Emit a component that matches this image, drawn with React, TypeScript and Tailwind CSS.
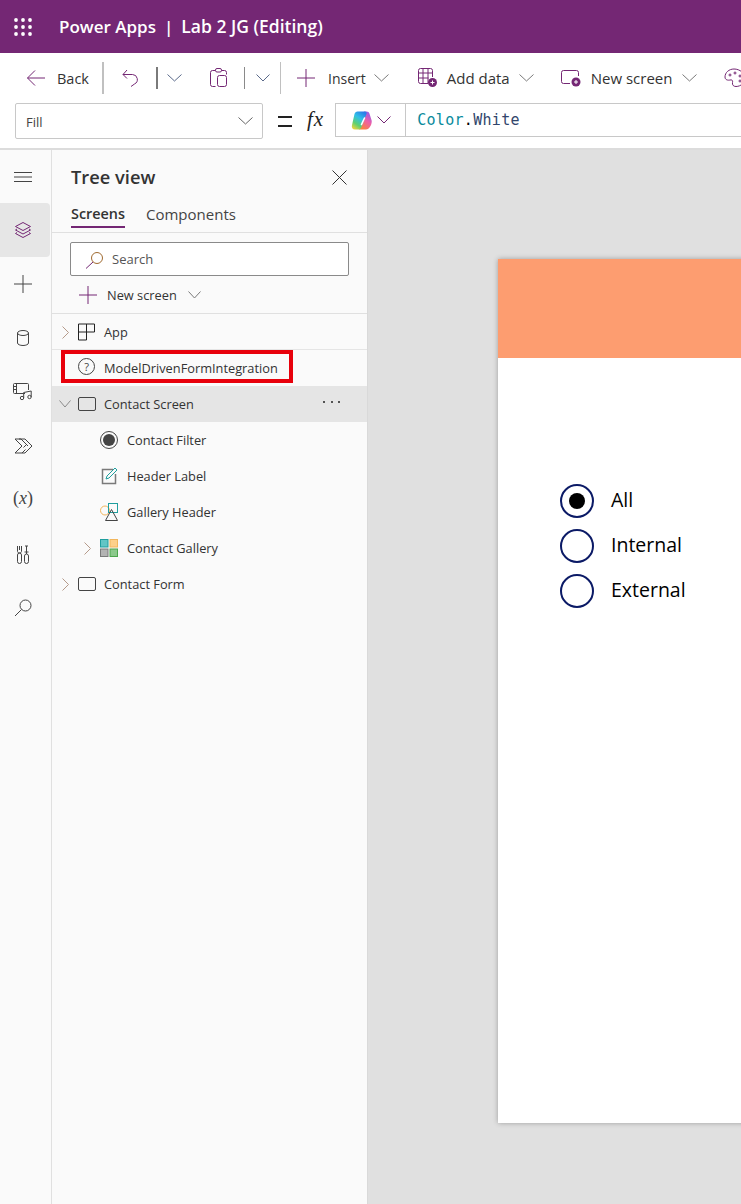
const FONT = { fontFamily: '"Open Sans", "Noto Sans", sans-serif' }

function Icon({ children, w = 20, h = 20, className = '' }: { children: React.ReactNode; w?: number; h?: number; className?: string }) {
  return (
    <svg width={w} height={h} viewBox={`0 0 ${w} ${h}`} fill="none" stroke="currentColor" strokeWidth="1" className={`shrink-0 ${className}`}>
      {children}
    </svg>
  )
}

function Chevron({ className = 'text-[#7a7a7a]', w = 15 }: { className?: string; w?: number }) {
  const mid = w / 2
  return (
    <Icon w={w} h={8} className={className}>
      <path d={`M.5 .5 ${mid} 7 ${w - 0.5} .5`} />
    </Icon>
  )
}

function ChevronSide() {
  return (
    <Icon w={7} h={13} className="text-[#b59a8a]">
      <path d="M.5 .5 6.500 6.500 .5 12.500" />
    </Icon>
  )
}

function WaffleIcon() {
  return (
    <svg width="18" height="18" viewBox="0 0 18 18" fill="white" className="shrink-0">
      {[2, 9, 16].flatMap((y) => [2, 9, 16].map((x) => <circle key={`${x}-${y}`} cx={x} cy={y} r="1.9" />))}
    </svg>
  )
}

function CopilotIcon() {
  return (
    <svg width="21" height="21" viewBox="0 0 21 21" className="shrink-0">
      <defs>
        <linearGradient id="cpLeft" x1="0.7" y1="0" x2="0.15" y2="1">
          <stop offset="0" stopColor="#2a7fe8" />
          <stop offset="0.35" stopColor="#2fc0e8" />
          <stop offset="0.7" stopColor="#5fd070" />
          <stop offset="1" stopColor="#f2d43c" />
        </linearGradient>
        <linearGradient id="cpRight" x1="0.85" y1="0" x2="0.3" y2="1">
          <stop offset="0" stopColor="#8a5cf0" />
          <stop offset="0.5" stopColor="#ee5fa7" />
          <stop offset="1" stopColor="#f9853c" />
        </linearGradient>
      </defs>
      <path d="M13 1.500h2.500c1.500 0 2.500.8 3 2.300l2 6.200c.8 2.800-.6 5.500-2 7.500-.8 1.300-2 2-3.500 2H8Z" fill="url(#cpRight)" />
      <path d="M6.500 1.500h7.500c1.500 0 2 1 1.500 2.500L10 18c-.5 1-1.500 1.500-3 1.500H4C1.500 19.500.3 17.500 1 15L3.500 4C4 2.500 5 1.500 6.500 1.500Z" fill="url(#cpLeft)" />
      <path d="M13.500 8 10.500 14.500" stroke="white" strokeWidth="1.600" strokeLinecap="round" />
    </svg>
  )
}

function RailButton({ children, active = false }: { children: React.ReactNode; active?: boolean }) {
  return (
    <div className={`flex h-[54px] w-[50px] items-center justify-center pr-[4px] ${active ? 'rounded-r-sm bg-[#e6e6e6]' : ''}`}>
      {children}
    </div>
  )
}

function Rail() {
  return (
    <aside className="flex w-[52px] shrink-0 flex-col border-r border-[#e0e0e0] bg-[#fafafa] text-[#444]">
      <div className="flex h-[53px] w-[50px] items-center justify-center pr-[4px]">
        <Icon w={18} h={12}>
          <path d="M0 1.500h18M0 6h18M0 10.500h18" />
        </Icon>
      </div>
      <RailButton active>
        <Icon w={18} h={18} className="text-[#742774]">
          <path d="M9 1.500 16.500 5.500 9 9.500 1.500 5.500Z" />
          <path d="M3 8 1.500 9 9 13 16.500 9 15 8" />
          <path d="M3 11.500 1.500 12.500 9 16.500 16.500 12.500 15 11.500" />
        </Icon>
      </RailButton>
      <RailButton>
        <Icon w={18} h={18}>
          <path d="M9 0v18M0 9h18" />
        </Icon>
      </RailButton>
      <RailButton>
        <Icon w={14} h={16}>
          <ellipse cx="7" cy="3" rx="5.500" ry="2.500" />
          <path d="M1.500 3v10c0 1.400 2.500 2.500 5.500 2.500s5.500-1.100 5.500-2.500V3" />
        </Icon>
      </RailButton>
      <RailButton>
        <Icon w={20} h={18}>
          <path d="M12 10.500H1.500a1 1 0 0 1-1-1v-8a1 1 0 0 1 1-1h13a1 1 0 0 1 1 1V7" />
          <path d="M3.500.500v10M.500 3.500h3M.500 6.500h3" />
          <circle cx="9" cy="15" r="1.700" />
          <circle cx="16.500" cy="14" r="1.700" />
          <path d="M10.700 15V9.500l7.500-1.500v6" />
        </Icon>
      </RailButton>
      <RailButton>
        <Icon w={19} h={16}>
          <path d="M1 1h10l7 7-7 7H1l7-7Z" />
          <path d="M5 1h2l7 7M8 15l3.500-3.500" />
          <path d="m9.500 9.500 3-3" />
        </Icon>
      </RailButton>
      <RailButton>
        <span className="-translate-y-[2px] text-[18px] text-[#444]" style={{ fontFamily: '"Liberation Serif", serif' }}>
          (<i>x</i>)
        </span>
      </RailButton>
      <RailButton>
        <Icon w={12} h={19}>
          <rect x=".500" y="8" width="4" height="10.500" rx="2" />
          <path d="M.500 1v5.500c0 .8.800 1.500 2 1.500s2-.7 2-1.500V1M2.500 1v4" />
          <rect x="7.500" y="9" width="4" height="9.500" rx="2" />
          <path d="M9.500 9V1M8 1h3" />
          <path d="M7.500 7h4" />
        </Icon>
      </RailButton>
      <RailButton>
        <Icon w={18} h={18}>
          <circle cx="11.500" cy="6.500" r="5.500" />
          <path d="M7.500 10.500 1 17" />
        </Icon>
      </RailButton>
    </aside>
  )
}

function TreeRow({
  label,
  icon,
  expander,
  nested = false,
  selected = false,
  children,
}: {
  label: string
  icon: React.ReactNode
  expander?: 'open' | 'closed'
  nested?: boolean
  selected?: boolean
  children?: React.ReactNode
}) {
  return (
    <div className={`flex h-9 items-center text-[12.8px] text-[#333] ${selected ? 'bg-[#e5e5e5]' : ''} ${nested ? 'pl-[26px]' : 'pl-[4px]'}`}>
      <span className="flex w-[18px] shrink-0 items-center justify-center">
        {expander === 'open' && <Chevron w={12} className="text-[#8a8a8a]" />}
        {expander === 'closed' && <ChevronSide />}
      </span>
      <span className={`ml-[4px] flex shrink-0 items-center ${nested ? 'w-[27px]' : 'w-[26px]'}`}>{icon}</span>
      <span className="translate-y-[0.5px]">{label}</span>
      {children}
    </div>
  )
}

const ScreenIcon = (
  <Icon w={18} h={14} className="text-[#444]">
    <rect x=".500" y=".500" width="17" height="13" rx="1.500" />
  </Icon>
)

function TreePanel() {
  return (
    <section className="flex w-[316px] shrink-0 flex-col border-r border-[#d9d9d9] bg-[#fafafa]">
      <div className="flex h-[54px] items-center justify-between pl-[19px] pr-[20px]">
        <h2 className="text-[18.3px] font-semibold text-[#333]">Tree view</h2>
        <Icon w={15} h={15} className="text-[#333]">
          <path d="m.5 .5 14 14M14.500 .5l-14 14" />
        </Icon>
      </div>
      <div className="flex h-[29px] items-start gap-[21px] border-b border-[#e0e0e0] pl-[19px] leading-[20px]">
        <span className="relative h-[24px] text-[14.4px] font-semibold text-[#333]">
          Screens
          <span className="absolute bottom-0 left-0 right-0 h-[2px] bg-[#742774]" />
        </span>
        <span className="text-[15px] text-[#444]">Components</span>
      </div>
      <div className="ml-[18px] mt-[9px] flex h-[34px] w-[279px] items-center rounded-[2px] border border-[#8a8a8a] bg-white pl-[14px] pt-px text-[13px] text-[#555]">
        <Icon w={20} h={18} className="text-[#742774]">
          <circle cx="12" cy="7" r="5.500" stroke="#a06a30" />
          <path d="M8 11 1 17.500" />
        </Icon>
        <span className="ml-[7px]">Search</span>
      </div>
      <div className="flex h-[38px] items-center border-b border-[#e0e0e0] pl-[27px] text-[12.8px] text-[#333]">
        <Icon w={18} h={18} className="text-[#742774]">
          <path d="M9 0v18M0 9h18" />
        </Icon>
        <span className="ml-[10px] translate-y-[1px]">New screen</span>
        <span className="ml-[11px]"><Chevron w={13} /></span>
      </div>
      <div className="h-9 border-b border-[#e5e5e5]">
        <TreeRow
          label="App"
          expander="closed"
          icon={
            <Icon w={18} h={18} className="text-[#222]">
              <path d="M.500 1h16v8h-8v8h-8ZM.500 9h8M8.500 1v8" />
            </Icon>
          }
        />
      </div>
      <div className="h-9">
        <div className="ml-[9px] flex h-[33px] w-[232px] items-center border-[4px] border-[#e8000b] pl-[13px] text-[12.8px] text-[#333]">
          <Icon w={17} h={17} className="text-[#444]">
            <circle cx="8.500" cy="8.500" r="8" />
            <text x="8.500" y="12.500" textAnchor="middle" fontSize="11" fill="#444" stroke="none" style={FONT}>?</text>
          </Icon>
          <span className="ml-[9px] translate-y-[2px] whitespace-nowrap">ModelDrivenFormIntegration</span>
        </div>
      </div>
      <TreeRow label="Contact Screen" expander="open" icon={ScreenIcon} selected>
        <span className="ml-auto mr-[27px] flex -translate-y-[2px] gap-[5.5px]">
          <span className="size-[2px] rounded-full bg-[#222]" />
          <span className="size-[2px] rounded-full bg-[#222]" />
          <span className="size-[2px] rounded-full bg-[#222]" />
        </span>
      </TreeRow>
      <TreeRow
        nested
        label="Contact Filter"
        icon={
          <Icon w={18} h={18} className="text-[#444]">
            <circle cx="9" cy="9" r="8.500" />
            <circle cx="9" cy="9" r="6" fill="#444" stroke="none" />
          </Icon>
        }
      />
      <TreeRow
        nested
        label="Header Label"
        icon={
          <Icon w={18} h={18} className="ml-[1px]">
            <path d="M12 2.500H1.500v14h13V7" stroke="#7a7a7a" strokeWidth="1.500" />
            <path d="m5 12 1-3 8-8 2 2-8 8Z" stroke="#1f9e9e" />
          </Icon>
        }
      />
      <TreeRow
        nested
        label="Gallery Header"
        icon={
          <Icon w={19} h={18}>
            <circle cx="5" cy="7.500" r="4.500" stroke="#f2b65c" />
            <rect x="8.500" y=".500" width="9" height="9" stroke="#1f9e9e" />
            <path d="M11.500 6.500 5.500 17.500h12Z" stroke="#444" />
          </Icon>
        }
      />
      <TreeRow
        nested
        label="Contact Gallery"
        expander="closed"
        icon={
          <svg width="18" height="18" viewBox="0 0 18 18" className="shrink-0">
            <rect x=".500" y=".500" width="7.500" height="7.500" fill="#62c5c5" stroke="#1f9e9e" />
            <rect x="10" y=".500" width="7.500" height="7.500" fill="#fdd08a" stroke="#f2b65c" />
            <rect x=".500" y="10" width="7.500" height="7.500" fill="#b3b3b3" stroke="#7a7a7a" />
            <rect x="10" y="10" width="7.500" height="7.500" fill="#8cc98c" stroke="#4da64d" />
          </svg>
        }
      />
      <TreeRow label="Contact Form" expander="closed" icon={ScreenIcon} />
    </section>
  )
}

function Radio({ label, checked = false }: { label: string; checked?: boolean }) {
  return (
    <div className="flex h-[45px] items-center">
      <span className="flex size-[34px] items-center justify-center rounded-full border-2 border-[#0b1a66]">
        {checked && <span className="size-4 rounded-full bg-black" />}
      </span>
      <span className="ml-[17px] -translate-y-[1px] text-[19.5px] text-black">{label}</span>
    </div>
  )
}

function Canvas() {
  return (
    <main className="min-w-0 flex-1 overflow-hidden bg-[#e0e0e0] pl-[130px] pt-[109px]">
      <div className="h-[864px] w-[500px] bg-white shadow-[0_0_5px_rgba(0,0,0,0.3)]">
        <div className="h-[99px] bg-[#fd9d70]" />
        <div className="pl-[62px] pt-[120px]">
          <Radio label="All" checked />
          <Radio label="Internal" />
          <Radio label="External" />
        </div>
      </div>
    </main>
  )
}

function ToolbarText({ children, className = '' }: { children: React.ReactNode; className?: string }) {
  return <span className={`translate-y-[1px] whitespace-nowrap text-[#333] ${className}`}>{children}</span>
}

function Toolbar() {
  return (
    <div className="flex h-[49px] items-center overflow-hidden bg-white pl-[26px] [&>*]:shrink-0">
      <Icon w={20} h={18} className="text-[#742774]">
        <path d="M19 9H1.500M9 1.500 1.500 9 9 16.500" />
      </Icon>
      <ToolbarText className="ml-[11px] text-[14.5px]">Back</ToolbarText>
      <span className="ml-[13px] h-8 w-[2px] bg-[#c0c0c0]" />
      <span className="ml-[18px]">
        <Icon w={17} h={18} className="text-[#742774]">
          <path d="M1 5.500h9.500a5 5 0 0 1 2 9.500L9 17.500M5 1 1 5.500 5 9.500" />
        </Icon>
      </span>
      <span className="ml-[17px] h-[22px] w-[2px] bg-[#7a7a7a]" />
      <span className="ml-[9px]"><Chevron className="text-[#5a6a8a]" /></span>
      <span className="ml-[28px]">
        <Icon w={17} h={19} className="text-[#742774]">
          <path d="M5.500 2.500H2.500a2 2 0 0 0-2 2v12a2 2 0 0 0 2 2h3M11.500 2.500h3a2 2 0 0 1 2 2v2" />
          <rect x="5.500" y=".500" width="6" height="3.500" rx="1.500" />
          <rect x="7.500" y="7.500" width="9" height="11" rx="2" />
        </Icon>
      </span>
      <span className="ml-[17px] h-[22px] w-px bg-[#8a8a8a]" />
      <span className="ml-[11px]"><Chevron w={14} className="text-[#5a6a8a]" /></span>
      <span className="ml-[10px] h-8 w-px bg-[#c0c0c0]" />
      <span className="ml-[16px]">
        <Icon w={18} h={18} className="text-[#742774]">
          <path d="M9 0v18M0 9h18" />
        </Icon>
      </span>
      <ToolbarText className="ml-[13px] text-[14px]">Insert</ToolbarText>
      <span className="ml-[8px]"><Chevron /></span>
      <span className="ml-[29px]">
        <Icon w={19} h={19} className="text-[#742774]">
          <path d="M10 15.500H2.500a2 2 0 0 1-2-2v-11a2 2 0 0 1 2-2h10a2 2 0 0 1 2 2V9" />
          <path d="M.500 5h14M.500 10h10M5 .500v15M10 .500v15" />
          <circle cx="14.500" cy="14.500" r="4.500" fill="#742774" stroke="none" />
          <path d="M12.500 14.500h4M14.500 12.500v4" stroke="white" />
        </Icon>
      </span>
      <ToolbarText className="ml-[10px] text-[15px]">Add data</ToolbarText>
      <span className="ml-[9px]"><Chevron /></span>
      <span className="ml-[27px]">
        <Icon w={20} h={18} className="text-[#742774]">
          <path d="M9 14.500H2.500a2 2 0 0 1-2-2v-9a2 2 0 0 1 2-2h13a2 2 0 0 1 2 2V7" />
          <circle cx="15" cy="13" r="4.500" fill="#742774" stroke="none" />
          <path d="M13 13h4M15 11v4" stroke="white" />
        </Icon>
      </span>
      <ToolbarText className="ml-[10px] text-[15px]">New screen</ToolbarText>
      <span className="ml-[10px]"><Chevron /></span>
      <span className="ml-[27px]">
        <Icon w={22} h={20} className="text-[#742774]">
          <path d="M10 1C5 1 1 4.500 1 9c0 3 3 3.500 5 3 2-.5 3 .5 2.500 2.500-.5 2.500 1 4 3.500 4 5 0 9-4 9-8.500S16 1 10 1Z" />
          <circle cx="6" cy="7" r="1" />
          <circle cx="11" cy="5" r="1" />
          <circle cx="16" cy="8" r="1" />
          <circle cx="16" cy="13" r="1" />
        </Icon>
      </span>
    </div>
  )
}

function FormulaBar() {
  return (
    <div className="flex h-[48px] items-start overflow-hidden border-b-2 border-[#dcdcdc] bg-white pl-[15px] pt-px">
      <div className="flex h-[36px] w-[248px] items-center justify-between rounded-[2px] border border-[#c8c8c8] pl-[10px] pr-[9px] pt-[3px] text-[13px] text-[#444]">
        Fill
        <span className="-translate-y-[2px]"><Chevron w={15} className="text-[#666]" /></span>
      </div>
      <span className="ml-[15px] mt-[13px] flex h-[11px] w-[14px] flex-col justify-between">
        <span className="h-[2px] bg-[#222]" />
        <span className="h-[2px] bg-[#222]" />
      </span>
      <span className="ml-[15px] mt-[1px] text-[21px] italic leading-[30px] tracking-[1px] text-[#222]" style={{ fontFamily: '"Liberation Serif", serif' }}>
        fx
      </span>
      <div className="ml-[11px] flex h-[34px] flex-1 items-center border border-r-0 border-[#c8c8c8]">
        <span className="ml-[15px]"><CopilotIcon /></span>
        <span className="ml-[5px]"><Chevron w={14} className="text-[#742774]" /></span>
        <span className="ml-[14px] h-full w-px bg-[#c8c8c8]" />
        <span className="ml-[11px] text-[15px] tracking-[0.3px]" style={{ fontFamily: '"DejaVu Sans Mono", monospace' }}>
          <span className="text-[#098a9c]">Color</span>
          <span className="text-black">.</span>
          <span className="text-[#31456b]">White</span>
        </span>
      </div>
    </div>
  )
}

export default function App() {
  return (
    <div className="flex h-[1204px] w-[741px] flex-col overflow-hidden" style={FONT}>
      <header className="flex h-[53px] shrink-0 items-center bg-[#742774] pl-[14px] text-white">
        <WaffleIcon />
        <span className="ml-[27px] text-[17px] font-semibold">Power Apps</span>
        <span className="ml-[8px] text-[17px] font-semibold">|</span>
        <span className="ml-[8px] whitespace-nowrap text-[17.5px] font-semibold">Lab 2 JG (Editing)</span>
      </header>
      <Toolbar />
      <FormulaBar />
      <div className="flex min-h-0 flex-1">
        <Rail />
        <TreePanel />
        <Canvas />
      </div>
    </div>
  )
}
